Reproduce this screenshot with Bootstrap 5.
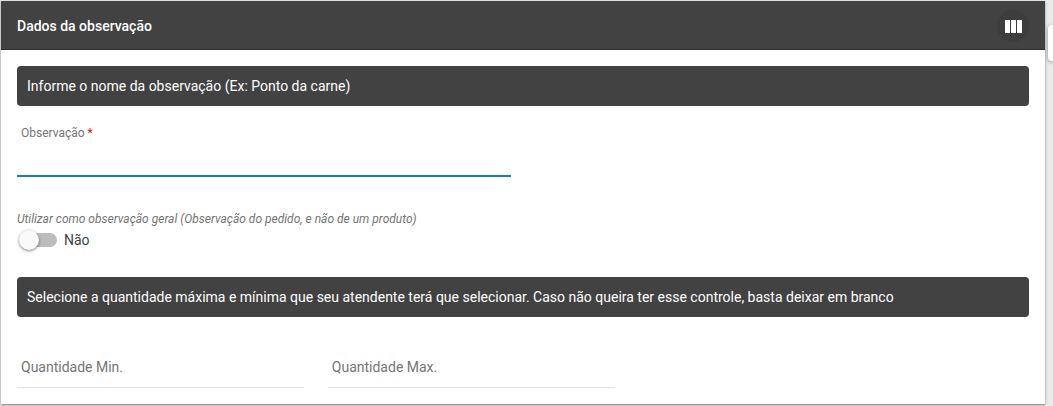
<!DOCTYPE html>
<html lang="pt-BR">
<head>
<meta charset="utf-8">
<meta name="viewport" content="width=device-width, initial-scale=1">
<title>Dados da observação</title>
<link href="https://cdn.jsdelivr.net/npm/bootstrap@5.3.0/dist/css/bootstrap.min.css" rel="stylesheet">
<style>
  body { background: #ebebeb; font: 14px/20px Roboto, sans-serif; color: #424242; padding: 1px 8px 2px 1px; }
  .panel { border: 0; border-radius: 0; color: inherit; box-shadow: 0 1px 3px rgba(0,0,0,.3), 0 1px 1px rgba(0,0,0,.2); }
  .panel-top { background: #424242; color: #fff; height: 49px; padding: 2px 16px 0; border-bottom: 1px solid #333; border-radius: 0 !important; }
  .panel-title { font-size: 14px; line-height: 20px; font-weight: 500; }
  .columns-btn { width: 32px; height: 32px; background: #3d3d3d; color: #fff; }
  .notice { background: #424242; color: #fff; border-radius: 4px; padding: 10px; }
  .field-label { font-size: 12px; line-height: 16px; color: #757575; margin: 19px 0 0 4px; }
  .required { color: #f00; }
  .line-input { border: 0; border-bottom: 1px solid #e0e0e0; border-radius: 0; background: transparent; padding: 0 4px; height: 42px; font-size: 14px; line-height: 20px; }
  .line-input:focus { box-shadow: none; border-color: #1976d2; background: transparent; }
  .line-input::placeholder { color: #757575; }
  .line-input.active-line { height: 36px; border-bottom: 2px solid #1976d2; }
  .hint { font-size: 12px; line-height: 16px; font-style: italic; color: #757575; margin-top: 34px; }
  .toggle-row { height: 26px; padding-left: 4px; gap: 7px; margin-bottom: 24px; }
  .toggle { appearance: none; width: 36px; height: 14px; margin: 0; border-radius: 7px; background: #bdbdbd; }
  .toggle::before { content: ""; display: block; width: 20px; height: 20px; margin: -3px 0 0 -2px; border-radius: 50%; background: #fafafa; box-shadow: 0 1px 3px rgba(0,0,0,.5); transition: margin .15s; }
  .toggle:checked { background: #90caf9; }
  .toggle:checked::before { margin-left: 18px; background: #1976d2; }
  .quantities { margin-top: 29px; }
  .quantity-col { flex: 0 0 auto; width: 30%; }
  .side-tab { top: 25px; width: 5px; height: 36px; background: #fff; border-radius: 4px 0 0 4px; box-shadow: 0 1px 4px rgba(0,0,0,.4); }
</style>
</head>
<body class="position-relative overflow-x-hidden">
<main class="card panel">
  <header class="card-header panel-top d-flex align-items-center justify-content-between">
    <h1 class="panel-title mb-0">Dados da observação</h1>
    <button type="button" class="btn columns-btn rounded-circle border-0 p-0 d-flex align-items-center justify-content-center" aria-label="Colunas">
      <svg width="18" height="14" viewBox="0 0 18 14" fill="currentColor" aria-hidden="true"><path d="M1 1h5v13H1zM7 1h5v13H7zM13 1h5v13h-5z"/></svg>
    </button>
  </header>
  <form class="card-body p-3">
    <div class="notice">Informe o nome da observação (Ex: Ponto da carne)</div>
    <div class="row gx-4">
      <div class="col-6">
        <label class="field-label d-block" for="observacao">Observação <span class="required">*</span></label>
        <input id="observacao" type="text" class="form-control line-input active-line" required>
      </div>
    </div>
    <div class="hint" id="geral-hint">Utilizar como observação geral (Observação do pedido, e não de um produto)</div>
    <div class="toggle-row d-flex align-items-center">
      <input id="geral" type="checkbox" role="switch" class="toggle" aria-describedby="geral-hint">
      <label for="geral">Não</label>
    </div>
    <div class="notice">Selecione a quantidade máxima e mínima que seu atendente terá que selecionar. Caso não queira ter esse controle, basta deixar em branco</div>
    <div class="row gx-4 quantities">
      <div class="quantity-col"><input type="text" inputmode="numeric" class="form-control line-input" placeholder="Quantidade Min." aria-label="Quantidade Min."></div>
      <div class="quantity-col"><input type="text" inputmode="numeric" class="form-control line-input" placeholder="Quantidade Max." aria-label="Quantidade Max."></div>
    </div>
  </form>
</main>
<div class="side-tab position-absolute end-0"></div>
<script src="https://cdn.jsdelivr.net/npm/bootstrap@5.3.0/dist/js/bootstrap.bundle.min.js"></script>
</body>
</html>
